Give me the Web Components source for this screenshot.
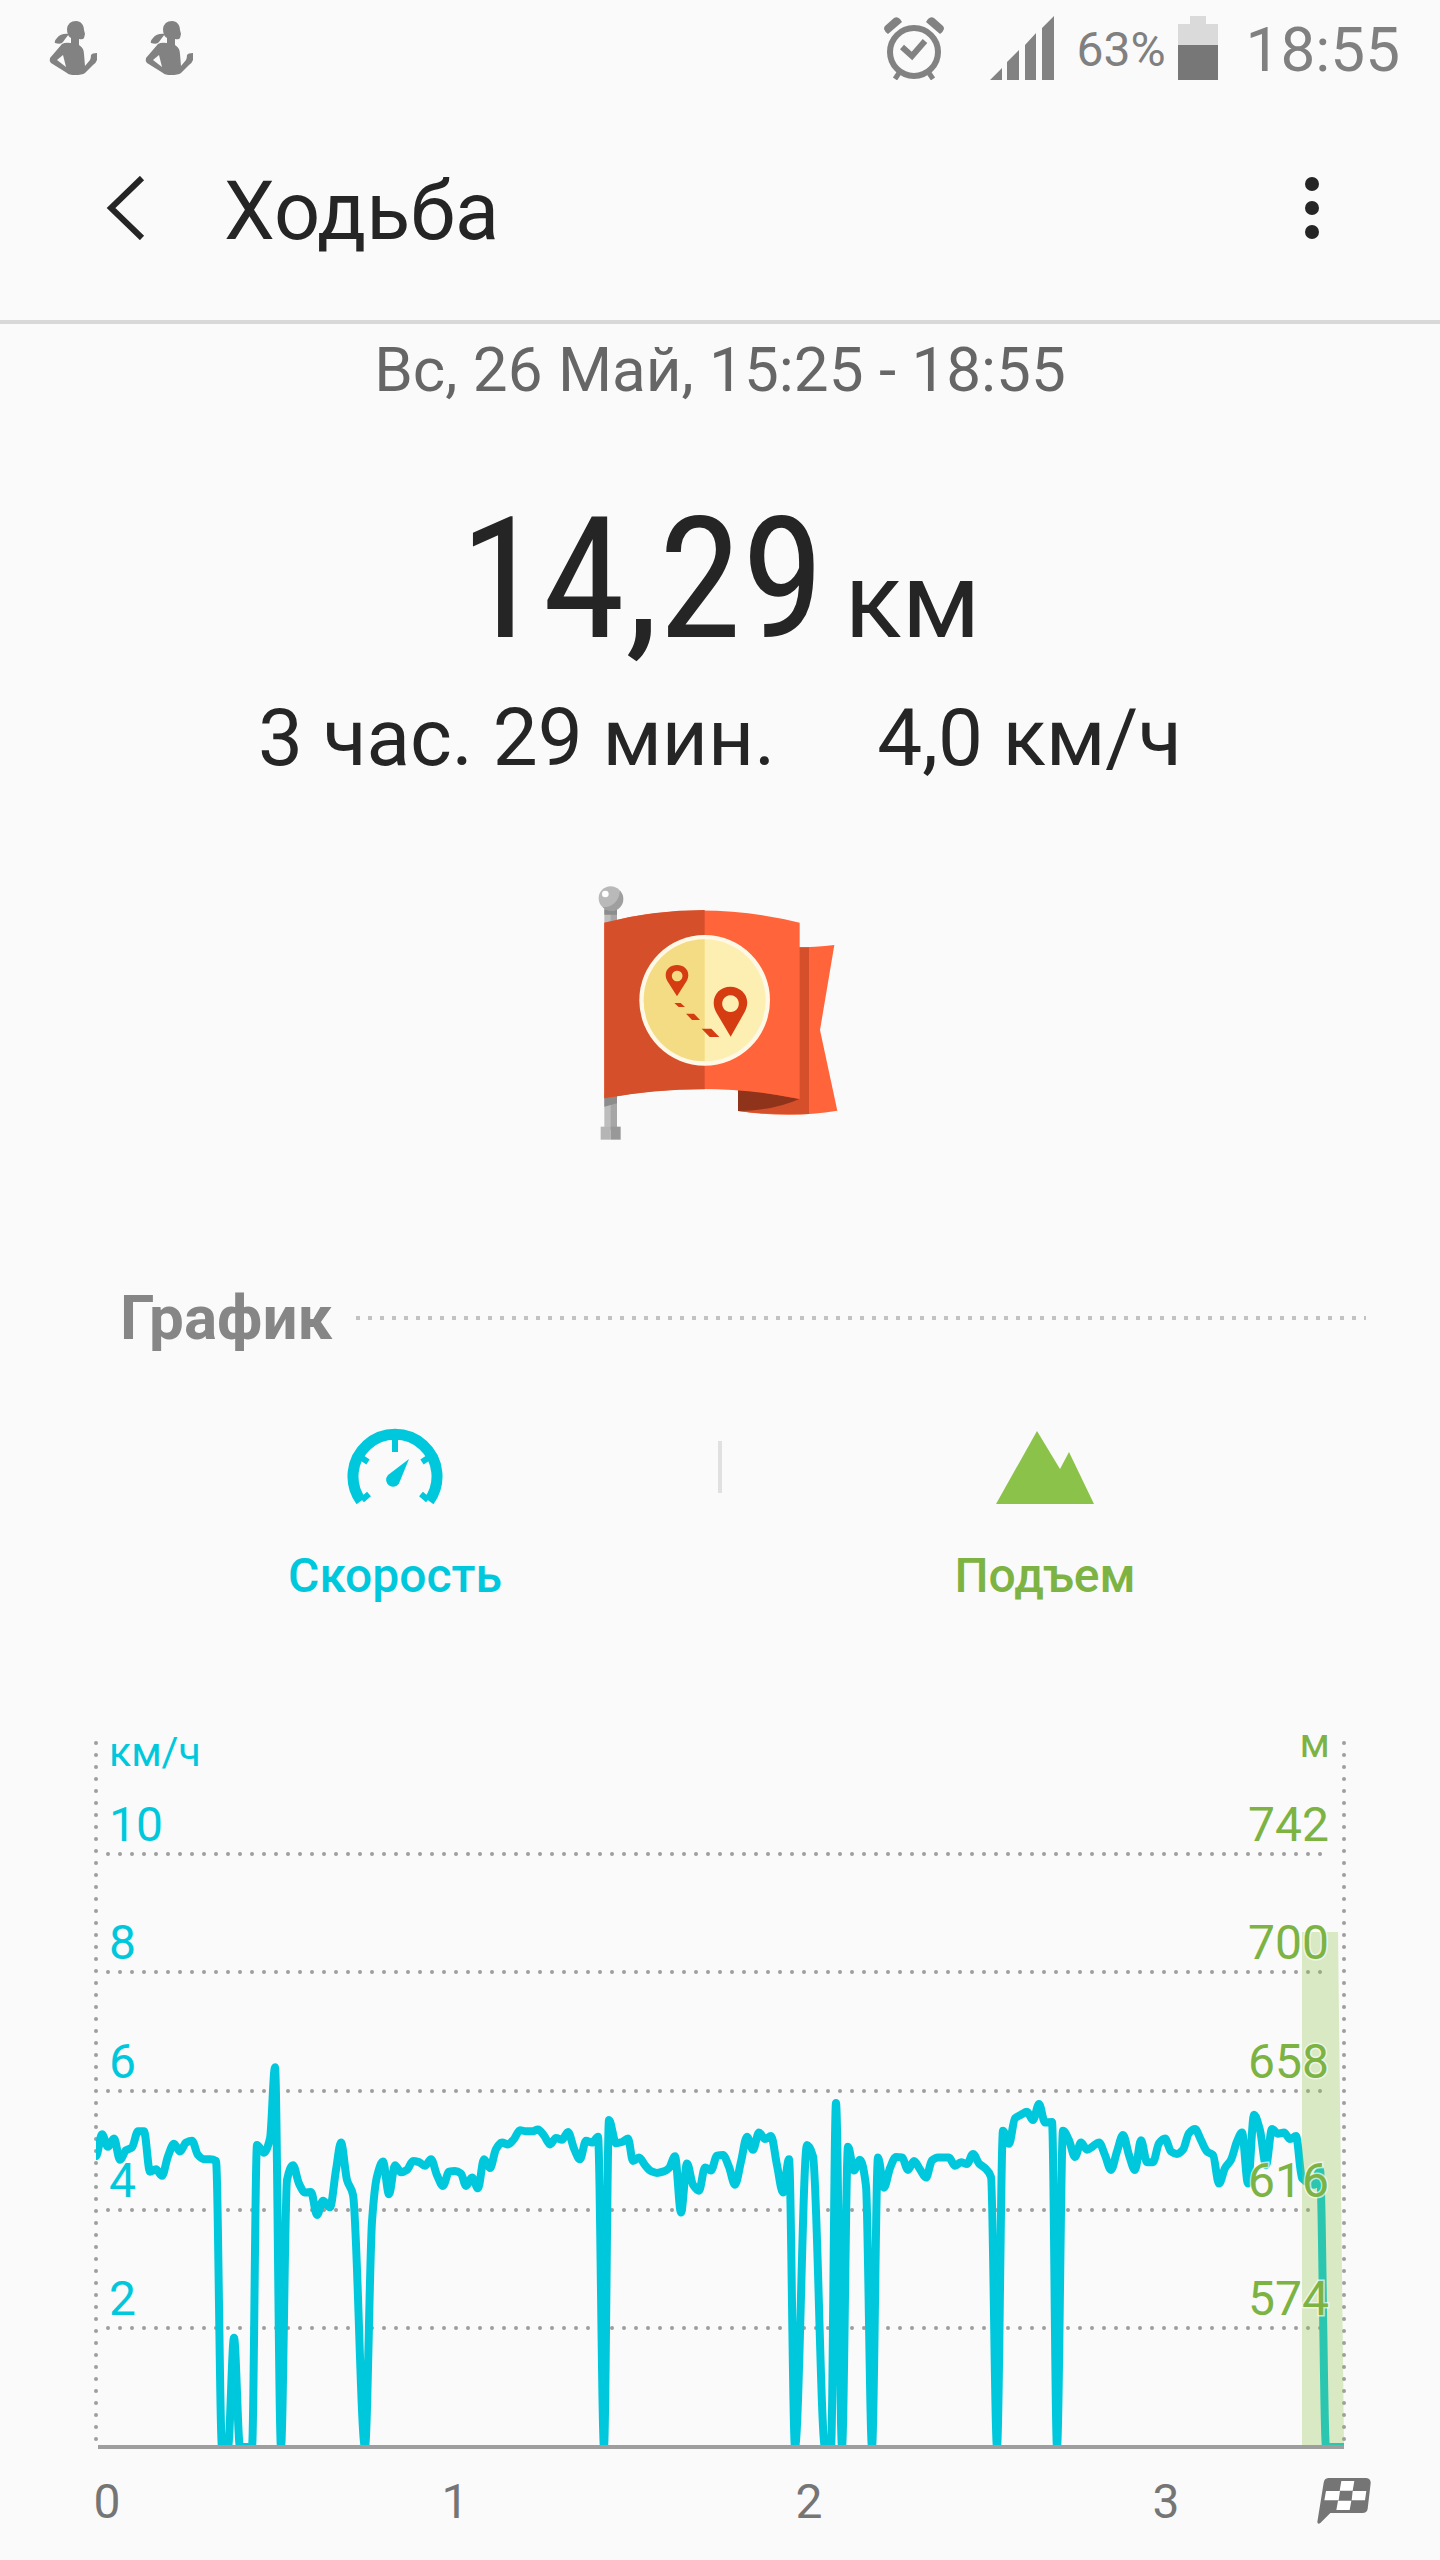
<!DOCTYPE html>
<html lang="ru">
<head>
<meta charset="utf-8">
<meta name="viewport" content="width=device-width, initial-scale=1">
<title>Ходьба</title>
<style>
  body {
    margin: 0;
    background: #fafafa;
    color: #252525;
    font-family: Roboto, "Noto Sans", sans-serif;
  }
</style>
</head>
<body>
<workout-page></workout-page>

<script>
(() => {
  class StatusBar extends HTMLElement {
    constructor() {
      super();
      this.attachShadow({ mode: "open" });
      const runner = `
        <svg width="48" height="56" viewBox="0 0 48 56" fill="#828282" aria-hidden="true">
          <path d="M27 1C32 1 35 5 35 10L36 14L35 18Q34 20 30 19V25Q35 28 35 34L36 46L41 40Q42 38 42 35Q43 33 48 33V40Q47 43 44 45L36 53Q33 55 26 55Q20 55 18 53L2 43Q0 41 1 38L13 24Q16 22 22 23V18Q18 16 18 9Q19 1 27 1Z"/>
          <path d="M20 14Q16 19 14 22Q12 25 6 23Q5 21 8 18Q12 13 20 14Z"/>
          <path d="M14 35L8 40L17 47Z" fill="#fafafa"/>
        </svg>`;
      this.shadowRoot.innerHTML = `
        <style>
          :host {
            display: flex;
            align-items: center;
            height: 96px;
            padding: 0 40px 0 49px;
            color: #808080;
          }
          svg { display: block; flex: none; }
          .left { display: flex; gap: 48px; margin-right: auto; }
          .signal { margin: 0 22px 0 46px; }
          .charge, time { padding-top: 4px; }
          .charge { font-size: 48px; line-height: 56px; }
          .battery { margin: 0 28px 0 12px; }
          time { font-size: 62px; line-height: 76px; }
        </style>
        <div class="left">${runner}${runner}</div>
        <svg width="60" height="64" viewBox="0 0 60 64" fill="none" stroke="#828282" aria-hidden="true">
          <circle cx="30" cy="36" r="24" stroke-width="6"/>
          <path d="M18 31L28 40L41 25" stroke-width="6"/>
          <path d="M15 57L11 63M45 57L49 63" stroke-width="5"/>
          <path d="M0 13Q0 11 1 10L10 2Q13 0 16 3L18 6L4 18Q1 16 0 13ZM60 13Q60 11 59 10L50 2Q47 0 44 3L42 6L56 18Q59 16 60 13Z" fill="#828282" stroke="none"/>
        </svg>
        <svg class="signal" width="64" height="64" viewBox="0 0 64 64" fill="#828282" aria-hidden="true">
          <path d="M0 64L12 52V64ZM17 64V46L29 34V64ZM35 64V29L46 17V64ZM52 64V12L64 0V64Z"/>
        </svg>
        <span class="charge">63%</span>
        <svg class="battery" width="40" height="64" viewBox="0 0 40 64" aria-hidden="true">
          <path d="M12 0H28V8H40V29H0V8H12Z" fill="#dadada"/>
          <path d="M0 29H40V64H0Z" fill="#777"/>
        </svg>
        <time>18:55</time>
      `;
    }
  }
  customElements.define("status-bar", StatusBar);

  class AppBar extends HTMLElement {
    constructor() {
      super();
      this.attachShadow({ mode: "open" });
      this.shadowRoot.innerHTML = `
        <style>
          :host {
            display: flex;
            align-items: center;
            height: 224px;
            padding: 0 96px 0 94px;
            border-bottom: 4px solid #d8d8d8;
          }
          button {
            display: flex;
            align-items: center;
            justify-content: center;
            width: 64px;
            height: 96px;
            padding: 0;
            border: 0;
            background: none;
          }
          h1 {
            flex: 1;
            margin: 0 0 0 66px;
            padding-top: 8px;
            font-size: 81px;
            font-weight: 400;
            line-height: 100px;
          }
        </style>
        <button type="button" aria-label="Назад">
          <svg width="40" height="64" viewBox="0 0 40 64" fill="none" stroke="#252525" stroke-width="6">
            <path d="M36 2L5 32L36 62"/>
          </svg>
        </button>
        <h1><slot></slot></h1>
        <button type="button" aria-label="Ещё">
          <svg width="16" height="64" viewBox="0 0 16 64" fill="#252525">
            <circle cx="8" cy="8" r="7"/><circle cx="8" cy="32" r="7"/><circle cx="8" cy="56" r="7"/>
          </svg>
        </button>
      `;
    }
  }
  customElements.define("app-bar", AppBar);

  class WorkoutSummary extends HTMLElement {
    constructor() {
      super();
      this.attachShadow({ mode: "open" });
      this.shadowRoot.innerHTML = `
        <style>
          :host {
            display: flex;
            flex-direction: column;
            align-items: center;
            padding-top: 8px;
          }
          .date { color: #666; font-size: 62px; line-height: 76px; }
          .distance {
            display: flex;
            align-items: baseline;
            gap: 20px;
            margin-top: 84px;
          }
          .value {
            font-family: "Roboto Condensed", Roboto, sans-serif;
            font-size: 168px;
            font-weight: 450;
            line-height: 176px;
          }
          .unit { font-size: 106px; line-height: 112px; }
          .details { display: flex; gap: 102px; margin-top: 20px; font-size: 80px; line-height: 100px; }
          svg { margin-top: 72px; }
        </style>
        <div class="date"><slot name="date"></slot></div>
        <div class="distance">
          <span class="value"><slot name="distance"></slot></span>
          <span class="unit"><slot name="unit"></slot></span>
        </div>
        <div class="details">
          <slot name="duration"></slot>
          <slot name="speed"></slot>
        </div>
        <svg width="320" height="300" viewBox="0 0 960 900" role="img" aria-label="Флаг">
          <path d="M133 140H171V810H133Z" fill="#bdbdbd"/>
          <path d="M152 140H171V810H152Z" fill="#a6a6a6"/>
          <path d="M133 148H171V164H133ZM133 700H171V730L133 740Z" fill="#8c8c8c"/>
          <path d="M122 800H152V839H122Z" fill="#b5b5b5"/>
          <path d="M152 800H182V839H152Z" fill="#989898"/>
          <circle cx="152" cy="115" r="36" fill="#b9b9b9"/>
          <path d="M180 92A36 36 0 0 1 128 142Q174 140 180 92Z" fill="#9f9f9f"/>
          <circle cx="136" cy="102" r="10" fill="#fff"/>
          <path d="M700 262Q770 262 823 255L780 510L832 752Q690 776 534 753V680Z" fill="#ff643a"/>
          <path d="M700 262L747 262V762Q640 766 534 753V680H700Z" fill="#d5502a"/>
          <path d="M534 685L718 717Q640 752 534 753Z" fill="#8f331b"/>
          <path d="M133 188Q420 115 719 188V717Q430 658 133 715Z" fill="#ff643a"/>
          <path d="M133 188Q280 150 434 150V688Q280 688 133 715Z" fill="#d5502a"/>
          <circle cx="434" cy="421" r="196" fill="#fff8e6"/>
          <circle cx="434" cy="421" r="183" fill="#fdefb2"/>
          <path d="M434 238A183 183 0 0 0 434 604Z" fill="#f4dc84"/>
          <path fill="#d63c12" fill-rule="evenodd" d="M351 409L322 363C308 336 326 315 351 315S394 336 380 363ZM351 332a16 16 0 1 0 1 0ZM512 530L468 456C448 416 474 380 511 380S576 416 554 456ZM511 406a25 25 0 1 0 1 0Z"/>
          <path d="M343 429H362L375 441H356ZM378 461H402L420 480H396ZM425 506H454L478 531H449Z" fill="#d63c12"/>
        </svg>
      `;
    }
  }
  customElements.define("workout-summary", WorkoutSummary);

  class SectionTitle extends HTMLElement {
    constructor() {
      super();
      this.attachShadow({ mode: "open" });
      this.shadowRoot.innerHTML = `
        <style>
          :host {
            display: flex;
            align-items: center;
            gap: 24px;
            padding: 0 74px 0 120px;
          }
          h2 { margin: 0; color: #868686; font-size: 62px; line-height: 76px; }
          .rule {
            flex: 1;
            height: 4px;
            background: repeating-linear-gradient(90deg, #c2c2c2 0 4px, transparent 4px 12px);
          }
        </style>
        <h2><slot></slot></h2>
        <div class="rule"></div>
      `;
    }
  }
  customElements.define("section-title", SectionTitle);

  class ChartLegend extends HTMLElement {
    constructor() {
      super();
      this.attachShadow({ mode: "open" });
      this.shadowRoot.innerHTML = `
        <style>
          :host {
            display: grid;
            grid-template-columns: 1fr 4px 1fr;
            padding: 0 72px;
          }
          button {
            display: flex;
            flex-direction: column;
            align-items: center;
            gap: 44px;
            padding: 0;
            border: 0;
            background: none;
            font: 500 48px/56px Roboto, "Noto Sans", sans-serif;
          }
          .speed { color: #00c8dc; }
          .climb { color: #7cb342; }
          .line { height: 52px; margin-top: 13px; background: #e0e0e0; }
        </style>
        <button type="button" class="speed">
          <svg width="96" height="76" viewBox="0 0 96 76" fill="none" stroke="#00c8dc">
            <path d="M14 73A42 42 0 1 1 82 73" stroke-width="11"/>
            <path d="M48 10V24M12 28L21 34M84 28L75 34M15 72L22 66M81 72L74 66" stroke-width="6"/>
            <path d="M62 31L53 53A7 7 0 1 1 41 47Z" fill="#00c8dc" stroke="none"/>
          </svg>
          Скорость
        </button>
        <div class="line"></div>
        <button type="button" class="climb">
          <svg width="98" height="76" viewBox="0 0 98 76" fill="#8bc34a">
            <path d="M41 3L64 41L73 24L98 76H0Z"/>
          </svg>
          Подъем
        </button>
      `;
    }
  }
  customElements.define("chart-legend", ChartLegend);

  // pairs of [offset along the time axis, speed in km/h]
  const SPEED = [
    [0, 4.9], [6, 5.27], [12, 5.06], [18, 5.2], [24, 4.84], [30, 5], [36, 5.05], [42, 5.32],
    [48, 5.32], [54, 4.64], [60, 4.68], [66, 4.57], [72, 4.9], [78, 5.11], [84, 4.98], [90, 5.13],
    [96, 5.16], [102, 4.92], [108, 4.85], [114, 4.85], [120, 4.82], [126, 0], [132, 0], [138, 1.84],
    [144, 0], [156, 0], [161, 5.09], [168, 4.96], [174, 5.2], [179, 6.4], [185, 0], [191, 4.5],
    [197, 4.75], [203, 4.44], [209, 4.29], [215, 4.3], [221, 3.91], [227, 4.15], [234, 4.04],
    [240, 4.67], [245, 5.13], [251, 4.5], [257, 4.25], [269, 0], [276, 3.8], [281, 4.56],
    [287, 4.81], [293, 4.26], [299, 4.75], [305, 4.63], [311, 4.67], [317, 4.82], [323, 4.8],
    [329, 4.74], [335, 4.85], [341, 4.58], [347, 4.4], [353, 4.64], [359, 4.65], [365, 4.61],
    [370, 4.4], [376, 4.54], [382, 4.36], [388, 4.85], [394, 4.7], [400, 5.02], [406, 5.13],
    [412, 5.1], [418, 5.19], [424, 5.34], [430, 5.32], [436, 5.32], [442, 5.35], [448, 5.25],
    [454, 5.1], [460, 5.21], [466, 5.18], [472, 5.31], [478, 5.03], [484, 4.85], [490, 5.16],
    [496, 5.13], [502, 5.23], [508, 0], [513, 5.51], [520, 5.12], [526, 5.14], [532, 5.2],
    [537, 4.82], [543, 4.88], [549, 4.75], [555, 4.65], [561, 4.62], [567, 4.64], [573, 4.7],
    [579, 4.9], [585, 3.95], [591, 4.78], [597, 4.42], [603, 4.32], [609, 4.71], [615, 4.66],
    [621, 4.91], [627, 4.92], [633, 4.72], [639, 4.42], [645, 4.81], [651, 5.23], [657, 5.01],
    [663, 5.3], [669, 5.19], [675, 5.24], [681, 4.75], [687, 4.29], [693, 4.85], [699, 0],
    [711, 5.09], [717, 4.9], [729, 0], [735, 0], [740, 5.8], [746, 0], [752, 5.06], [758, 4.66],
    [764, 4.84], [770, 4.4], [776, 0], [782, 4.88], [788, 4.37], [794, 4.7], [800, 4.89],
    [806, 4.88], [812, 4.67], [818, 4.82], [824, 4.68], [830, 4.54], [836, 4.83], [842, 4.88],
    [853, 4.88], [859, 4.74], [865, 4.8], [871, 4.77], [877, 4.94], [883, 4.78], [889, 4.7],
    [895, 4.55], [901, 0], [907, 5.33], [913, 5.11], [919, 5.54], [925, 5.6], [931, 5.65],
    [937, 5.51], [943, 5.78], [949, 5.47], [956, 5.48], [961, 0], [967, 5.33], [973, 5.17],
    [979, 4.89], [985, 5.13], [991, 5.01], [997, 5.07], [1003, 5.13], [1009, 4.92], [1015, 4.67],
    [1021, 4.98], [1027, 5.26], [1033, 4.92], [1039, 4.67], [1045, 5.17], [1051, 4.8], [1057, 4.8],
    [1063, 5.12], [1069, 5.2], [1075, 4.98], [1081, 4.94], [1087, 5.01], [1093, 5.29],
    [1099, 5.36], [1105, 5.17], [1111, 4.98], [1117, 4.92], [1123, 4.44], [1129, 4.7],
    [1135, 4.84], [1141, 5.15], [1146, 5.3], [1152, 4.44], [1158, 5.6], [1164, 5.34], [1170, 4.75],
    [1176, 5.36], [1182, 5.28], [1188, 5.3], [1194, 5.19], [1200, 5.24], [1206, 4.53],
    [1218, 4.42], [1224, 4.67], [1230, 0], [1248, 0],
  ];

  const LEFT = 96;
  const BASE = 737;
  const KMH = 178 / 3;

  // smooth line that never overshoots its points
  function linePath(data) {
    const pts = data.map(([x, v]) => [LEFT + x, BASE - v * KMH]);
    const slope = pts.map((p, i) => {
      if (i === 0 || i === pts.length - 1) return 0;
      const a = (p[1] - pts[i - 1][1]) / (p[0] - pts[i - 1][0]);
      const b = (pts[i + 1][1] - p[1]) / (pts[i + 1][0] - p[0]);
      return a * b <= 0 ? 0 : (2 * a * b) / (a + b);
    });
    let d = `M${pts[0][0]} ${pts[0][1].toFixed(1)}`;
    for (let i = 1; i < pts.length; i++) {
      const [x0, y0] = pts[i - 1];
      const [x1, y1] = pts[i];
      const h = (x1 - x0) / 3;
      d += `C${(x0 + h).toFixed(1)} ${(y0 + slope[i - 1] * h).toFixed(1)} ${(x1 - h).toFixed(1)} ${(y1 - slope[i] * h).toFixed(1)} ${x1} ${y1.toFixed(1)}`;
    }
    return d;
  }

  class SpeedChart extends HTMLElement {
    constructor() {
      super();
      this.attachShadow({ mode: "open" });
    }
    connectedCallback() {
      const speeds = [10, 8, 6, 4, 2];
      const heights = [742, 700, 658, 616, 574];
      const hours = [[107, 0], [455, 1], [809, 2], [1166, 3]];
      const rowY = (i) => Math.round(BASE - speeds[i] * KMH);
      this.shadowRoot.innerHTML = `
        <style>
          :host { display: block; }
          svg { display: block; width: 100%; height: auto; }
          svg svg { width: 54px; height: 46px; }
          text { font-size: 48px; }
          .unit { font-size: 41px; }
          .grid { stroke: #9e9e9e; stroke-width: 4; stroke-linecap: round; stroke-dasharray: 0 12; }
          .left { fill: #00c8dc; }
          .right {
            fill: #7cb342;
            text-anchor: end;
            stroke: #fafafa;
            stroke-opacity: 0.7;
            stroke-width: 3;
            paint-order: stroke;
          }
          .hour { fill: #757575; text-anchor: middle; }
        </style>
        <svg viewBox="0 0 1440 850" role="group" aria-label="График скорости">
          <clipPath id="plot"><path d="M96 0H1344V735H96Z"/></clipPath>
          <path class="grid" fill="none" d="M96 33V731M1344 33V731"/>
          ${speeds.map((v, i) => `<path class="grid" d="M108 ${rowY(i)}H1321"/>`).join("")}
          ${speeds.map((v, i) => `<text class="left" x="109" y="${rowY(i) - 13}">${v}</text>`).join("")}
          <path d="${linePath(SPEED)}" clip-path="url(#plot)" fill="none" stroke="#00c8dc" stroke-width="8" stroke-linejoin="round"/>
          <path d="M1302 222H1338L1344 735H1302Z" fill="#8bc34a" fill-opacity="0.3"/>
          <path d="M98 737H1344" stroke="#9e9e9e" stroke-width="4"/>
          <text class="left unit" x="109" y="56">км/ч</text>
          <text class="right unit" x="1330" y="47">м</text>
          ${heights.map((v, i) => `<text class="right" x="1329" y="${rowY(i) - 13}">${v}</text>`).join("")}
          ${hours.map(([x, v]) => `<text class="hour" x="${x}" y="808">${v}</text>`).join("")}
          <svg x="1317" y="768" viewBox="0 0 162 138">
            <path d="M34 0H148Q162 2 161 16L152 92Q150 105 136 105H40L10 135Q2 140 1 132L20 14Q22 1 34 0Z" fill="#757575"/>
            <path d="M73 9H112L107 38H68ZM27 39H69L65 67H22ZM107 39H148L144 67H104ZM63 68H103L98 96H58Z" fill="#fff"/>
          </svg>
        </svg>
      `;
    }
  }
  customElements.define("speed-chart", SpeedChart);

  class WorkoutPage extends HTMLElement {
    constructor() {
      super();
      this.attachShadow({ mode: "open" });
      this.shadowRoot.innerHTML = `
        <style>
          :host { display: block; }
          section-title { margin-top: 120px; }
          chart-legend { margin-top: 72px; }
          speed-chart { margin-top: 106px; }
        </style>
        <status-bar></status-bar>
        <app-bar>Ходьба</app-bar>
        <main>
          <workout-summary>
            <span slot="date">Вс, 26 Май, 15:25 - 18:55</span>
            <span slot="distance">14,29</span>
            <span slot="unit">км</span>
            <span slot="duration">3 час. 29 мин.</span>
            <span slot="speed">4,0 км/ч</span>
          </workout-summary>
          <section-title>График</section-title>
          <chart-legend></chart-legend>
          <speed-chart></speed-chart>
        </main>
      `;
    }
  }
  customElements.define("workout-page", WorkoutPage);
})();
</script>
</body>
</html>
